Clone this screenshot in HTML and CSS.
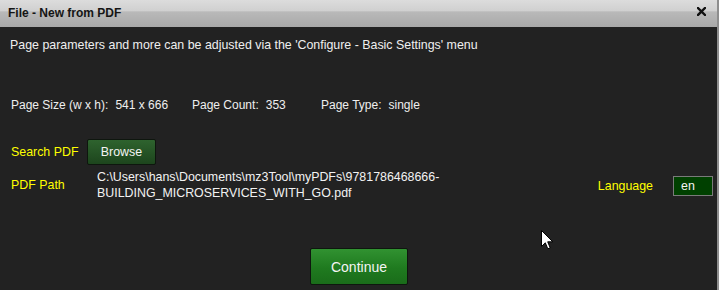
FILE: index.html
```html
<!DOCTYPE html>
<html>
<head>
<meta charset="utf-8">
<link rel="stylesheet" href="styles.css">
</head>
<body>
<div class="window">
  <div class="titlebar">
    <span class="title">File - New from PDF</span>
    <svg class="close" width="9" height="9" viewBox="0 0 9 9"><path d="M1 1 L8 8 M8 1 L1 8" stroke="#111" stroke-width="2.4" stroke-linecap="square"/></svg>
  </div>
  <div class="content">
    <p class="intro">Page parameters and more can be adjusted via the 'Configure - Basic Settings' menu</p>
    <div class="stats">
      <div class="stat stat-size"><span>Page Size (w x h):</span><span>541 x 666</span></div>
      <div class="stat stat-count"><span>Page Count:</span><span>353</span></div>
      <div class="stat"><span>Page Type:</span><span>single</span></div>
    </div>
    <div class="row search-row">
      <span class="label label-search">Search PDF</span>
      <button class="btn btn-browse">Browse</button>
    </div>
    <div class="row path-row">
      <span class="label label-path">PDF Path</span>
      <span class="path">C:\Users\hans\Documents\mz3Tool\myPDFs\9781786468666-<br>BUILDING_MICROSERVICES_WITH_GO.pdf</span>
      <span class="label label-lang">Language</span>
      <span class="lang-box">en</span>
    </div>
    <div class="actions">
      <button class="btn btn-continue">Continue</button>
    </div>
  </div>
  <svg class="cursor" width="13" height="20" viewBox="0 0 13 20"><path d="M0.5 0.5 L0.5 16.5 L4.3 12.8 L6.8 18.8 L9.2 17.8 L6.7 11.8 L11.8 11.8 Z" fill="#fff" stroke="#000" stroke-width="1"/></svg>
</div>
</body>
</html>
```

FILE: styles.css
```css
html, body {
  margin: 0;
  padding: 0;
  background: #222222;
}
body {
  width: 719px;
  height: 290px;
  overflow: hidden;
  font-family: "Liberation Sans", Arial, sans-serif;
  font-size: 12.4px;
  color: #efefef;
}
.window {
  position: relative;
  width: 717px;
  height: 290px;
  border-right: 2px solid #8e8e8e;
  display: flex;
  flex-direction: column;
}
.titlebar {
  height: 27px;
  flex: none;
  display: flex;
  align-items: center;
  justify-content: space-between;
  padding: 0 11px 0 8px;
  background: linear-gradient(#dcdcdc 0%, #d0d0d0 40%, #b9b9b9 44%, #a9a9a9 100%);
  color: #151515;
}
.title {
  font-weight: bold;
  font-size: 12px;
  line-height: 16px;
  margin-top: -2px;
}
.close {
  margin-top: -4px;
}
.content {
  display: flex;
  flex-direction: column;
  padding-left: 11px;
}
.intro {
  margin: 10px 0 0 -1px;
  line-height: 16px;
}
.stats {
  display: flex;
  margin-top: 44px;
  line-height: 16px;
  font-size: 12px;
}
.stat {
  display: flex;
  gap: 7px;
}
.stat-size {
  width: 181px;
}
.stat-count {
  width: 129px;
}
.row {
  display: flex;
  align-items: center;
}
.search-row {
  margin-top: 26px;
}
.label {
  color: #ffff00;
  line-height: 16px;
}
.label-search {
  width: 76px;
}
.label-path {
  width: 86px;
}
.btn {
  font-family: "Liberation Sans", Arial, sans-serif;
  color: #f4f4f4;
  border: 1px solid #0e160e;
  border-radius: 2px;
  padding: 0;
  cursor: default;
}
.btn-browse {
  width: 69px;
  height: 26px;
  font-size: 12.4px;
  background: linear-gradient(#2e632e, #1d451d);
}
.path-row {
  margin-top: 4px;
}
.path {
  flex: 1;
  line-height: 16px;
  color: #f2f2f2;
}
.label-lang {
  margin-right: 20px;
  margin-top: 1px;
}
.lang-box {
  width: 31px;
  height: 18px;
  margin-right: 4px;
  margin-top: 2px;
  padding-left: 7px;
  line-height: 18px;
  background: #004000;
  border: 1px solid #7a7a7a;
  color: #f4f4f4;
}
.actions {
  display: flex;
  justify-content: center;
  margin-top: 47px;
  padding-right: 11px;
}
.btn-continue {
  width: 98px;
  height: 37px;
  font-size: 14px;
  background: linear-gradient(#319231, #1f7a1f 55%, #1a6c1a);
  margin-left: 1px;
}
.cursor {
  position: absolute;
  left: 541px;
  top: 230px;
}
```
